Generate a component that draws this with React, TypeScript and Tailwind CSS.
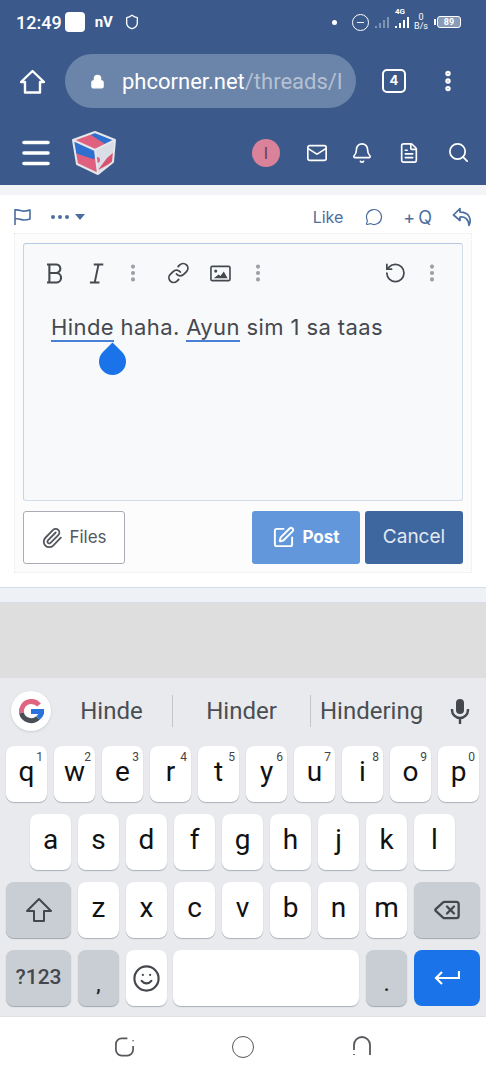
import { Bell, Delete, FileText, Link, Lock, Mail, Menu, MessageCircle, Minus, MoreVertical, Paperclip, RotateCcw, Search, Shield, Smile, SquarePen } from "lucide-react";

const TOP_ROW = [
  ["q", "1"],
  ["w", "2"],
  ["e", "3"],
  ["r", "4"],
  ["t", "5"],
  ["y", "6"],
  ["u", "7"],
  ["i", "8"],
  ["o", "9"],
  ["p", "0"],
];

function Key({ label, hint }: { label: string; hint?: string }) {
  return (
    <div className="relative flex h-[56px] w-[41px] items-center justify-center rounded-[8px] bg-white pb-[4px] text-[28px] leading-none text-[#111] shadow-[0_1px_1px_#aab0b8]">
      {label}
      {hint && <span className="absolute right-[4px] top-[4px] text-[12px] leading-[14px] text-[#444]">{hint}</span>}
    </div>
  );
}

function GrayKey({ className, children }: { className: string; children: React.ReactNode }) {
  return (
    <div className={`flex h-[56px] items-center justify-center rounded-[8px] bg-[#c9ced4] shadow-[0_1px_1px_#a0a6ad] ${className}`}>
      {children}
    </div>
  );
}

function Signal({ heights, className }: { heights: number[]; className: string }) {
  return (
    <div className="flex items-end gap-[2px]">
      {heights.map((h, i) => (
        <div key={i} className={`w-[2px] ${className} ${h === 2 ? "h-[2px]" : h === 5 ? "h-[5px]" : h === 8 ? "h-[8px]" : "h-[11px]"}`} />
      ))}
    </div>
  );
}

function Logo() {
  return (
    <svg width="46" height="46" viewBox="0 0 46 46">
      <path d="M2 10 L24 2 L44 10 L24 20Z" fill="#e0607f" />
      <path d="M24 2 L44 10 L34 14 L20 5Z" fill="#2f6fd0" />
      <path d="M2 10 L24 20 L27 44 L6 34Z" fill="#e0607f" />
      <path d="M2 10 L24 20 L25 30 L4 23Z" fill="#2f6fd0" />
      <path d="M24 20 L44 10 L42 32 L27 44Z" fill="#d9dde6" />
      <path d="M27 40 L42 32 L43 22 L36 28Z" fill="#d9526f" />
      <circle cx="26" cy="30" r="3" fill="#e0607f" />
      <path d="M2 10 L24 2 L44 10 L42 32 L27 44 L6 34Z M2 10 L24 20 L44 10 M24 20 L27 44" fill="none" stroke="#e4e6ea" strokeWidth="2" strokeLinejoin="round" />
    </svg>
  );
}

function Dots() {
  return <MoreVertical className="h-[22px] w-[22px] text-[#9a9da3]" strokeWidth={2.5} />;
}

export default function App() {
  return (
    <div className="flex h-[1080px] w-[486px] flex-col overflow-hidden bg-white font-['Inter',sans-serif]">
      {/* Blue browser chrome */}
      <div className="h-[185px] shrink-0 bg-[#3b5a8b] text-white">
        <div className="flex h-[40px] items-center pl-[16px] pr-[25px] pt-[4px] font-['Roboto',sans-serif]">
          <span className="text-[18px] font-medium">12:49</span>
          <div className="ml-[3px] h-[20px] w-[20px] rounded-[4px] bg-white" />
          <span className="ml-[10px] text-[15px] font-bold">nV</span>
          <Shield className="ml-[11px] h-[16px] w-[16px]" />
          <div className="ml-auto h-[5px] w-[5px] rounded-full bg-white" />
          <div className="ml-[15px] flex h-[17px] w-[17px] items-center justify-center rounded-full border-[1.5px] border-white">
            <Minus className="h-[11px] w-[11px]" />
          </div>
          <div className="ml-[6px] opacity-35">
            <Signal heights={[2, 5, 8, 11]} className="bg-white" />
          </div>
          <div className="relative ml-[6px]">
            <span className="absolute -top-[9px] left-0 text-[8px] font-bold leading-none">4G</span>
            <Signal heights={[2, 5, 8, 11]} className="bg-white" />
          </div>
          <div className="ml-[5px] flex flex-col items-center text-[9px] leading-[9px]">
            <span>0</span>
            <span>B/s</span>
          </div>
          <div className="ml-[6px] h-[6px] w-[2px] bg-white" />
          <div className="ml-[1px] flex h-[12px] w-[24px] items-center justify-center rounded-[3px] border border-white bg-[#8a9bb8] text-[9px] font-bold leading-none">89</div>
        </div>

        <div className="flex h-[78px] items-center pt-[4px]">
          <svg className="ml-[20px]" width="25" height="25" viewBox="0 0 25 25" fill="none" stroke="white" strokeWidth="2.4" strokeLinejoin="round">
            <path d="M12.5 2 L24 13 H20 V23.5 H5 V13 H1Z" />
          </svg>
          <div className="ml-[20px] flex h-[54px] w-[291px] items-center rounded-full bg-[#6b84a9] pl-[25px] font-['Roboto',sans-serif] text-[22px]">
            <Lock className="h-[17px] w-[15px] fill-white" />
            <div className="ml-[17px] w-[221px] overflow-hidden whitespace-nowrap">
              phcorner.net<span className="text-[#b5c1d3]">/threads/lc</span>
            </div>
          </div>
          <div className="ml-[26px] flex h-[24px] w-[24px] items-center justify-center rounded-[5px] border-2 border-white text-[13px] font-bold">4</div>
          <MoreVertical className="ml-[29px] h-[26px] w-[26px]" strokeWidth={3} />
        </div>

        <div className="flex h-[67px] items-center pt-[2px]">
          <Menu className="ml-[18px] h-[36px] w-[36px]" strokeWidth={2.4} />
          <div className="ml-[17px]">
            <Logo />
          </div>
          <div className="ml-[135px] flex h-[28px] w-[28px] items-center justify-center rounded-full bg-[#d9829a] text-[16px] text-[#6b3a48]">I</div>
          <Mail className="ml-[26px] h-[22px] w-[22px]" strokeWidth={1.8} />
          <Bell className="ml-[23px] h-[22px] w-[22px]" strokeWidth={1.8} />
          <FileText className="ml-[25px] h-[22px] w-[22px]" strokeWidth={1.8} />
          <Search className="ml-[27px] h-[23px] w-[23px]" strokeWidth={1.8} />
        </div>
      </div>

      <div className="h-[10px] shrink-0 bg-[#f2f4f8]" />

      {/* Post card */}
      <div className="h-[392px] shrink-0 bg-white px-[14px]">
        <div className="flex h-[38px] items-center pt-[6px] text-[#4b6e9f]">
          <svg className="-ml-px h-[20px] w-[20px]" viewBox="0 0 20 20" fill="none" stroke="currentColor" strokeWidth="1.6">
            <path d="M2 2v16M2 3c5-1 6 2 10 1 2 0 4-1 5-1v9c-3 1-4 1-6 1-3 0-5-2-9-1" />
          </svg>
          <div className="ml-[18px] flex gap-[3px]">
            <div className="h-[4px] w-[4px] rounded-full bg-[#4b6e9f]" />
            <div className="h-[4px] w-[4px] rounded-full bg-[#4b6e9f]" />
            <div className="h-[4px] w-[4px] rounded-full bg-[#4b6e9f]" />
          </div>
          <div className="ml-[6px] h-0 w-0 border-x-[5px] border-t-[6px] border-x-transparent border-t-[#4b6e9f]" />
          <span className="ml-auto text-[16px]">Like</span>
          <MessageCircle className="ml-[22px] h-[18px] w-[18px]" strokeWidth={1.6} />
          <span className="ml-[20px] text-[18px] tracking-[3px]">+Q</span>
          <svg className="ml-[17px]" width="20" height="20" viewBox="0 0 20 20" fill="none" stroke="currentColor" strokeWidth="1.7" strokeLinejoin="round">
            <path d="M8 1.5 L1.5 8 L8 13.5 V10 C13 9.5 16.5 12 17 18.5 C20 12 17 5 8 5.2Z" />
          </svg>
        </div>

        <div className="h-[340px] border border-dotted border-[#e8eaee] bg-[#fcfcfd] px-[8px] pt-[9px]">
          <div className="h-[258px] rounded-[3px] border border-[#d4dde9] border-t-[#b5c8e2] border-l-[#c4d2e6] bg-[#f8f9fb] px-[19px] pt-[13px] text-[#45494f]">
            <div className="flex h-[32px] items-center">
              <svg className="ml-[4px]" width="16" height="21" viewBox="0 0 16 21" fill="none" stroke="currentColor" strokeWidth="2.2">
                <path d="M0 1 H9 A4.5 4.5 0 0 1 10 10 A5 5 0 0 1 9.5 20 H0 M2.5 1 V20 M2.5 10 H10" />
              </svg>
              <svg className="ml-[27px]" width="16" height="21" viewBox="0 0 16 21" fill="none" stroke="currentColor" strokeWidth="2">
                <path d="M5 1 H15 M1 20 H11 M10 1 L6 20" />
              </svg>
              <div className="ml-[18px]"><Dots /></div>
              <Link className="ml-[23px] h-[24px] w-[24px]" strokeWidth={1.9} />
              <svg className="ml-[20px]" width="22" height="17" viewBox="0 0 22 17">
                <rect x="1" y="1" width="20" height="15" rx="1.5" fill="none" stroke="currentColor" strokeWidth="1.7" />
                <circle cx="6" cy="6" r="1.6" fill="currentColor" />
                <path d="M4 13.5 L9 9.5 L11 11 L14.5 6.5 L18.5 13.5Z" fill="currentColor" />
              </svg>
              <div className="ml-[16px]"><Dots /></div>
              <RotateCcw className="ml-[115px] h-[24px] w-[24px]" strokeWidth={1.8} />
              <div className="ml-[14px]"><Dots /></div>
            </div>
            <div className="relative ml-[8px] mt-[23px] text-[22px] leading-[30px] tracking-[0.4px]">
              <span className="border-b-2 border-[#4a7fd6]">Hinde</span> haha. <span className="border-b-2 border-[#4a7fd6]">Ayun</span> sim 1 sa taas
              <div className="absolute left-[48px] top-[36px] h-[27px] w-[27px] rotate-45 rounded-[50%_50%_50%_50%] rounded-tl-none bg-[#1a73e8]" />
            </div>
          </div>

          <div className="mt-[10px] flex">
            <div className="flex h-[53px] w-[102px] items-center justify-center gap-[6px] rounded-[3px] border border-[#a9adb3] bg-white text-[17px] text-[#55595f]">
              <Paperclip className="h-[22px] w-[22px]" strokeWidth={2} />
              Files
            </div>
            <div className="ml-auto flex h-[53px] w-[108px] items-center justify-center gap-[7px] rounded-[3px] bg-[#6397dc] text-[17px] font-bold text-white">
              <SquarePen className="h-[23px] w-[23px]" strokeWidth={2} />
              Post
            </div>
            <div className="ml-[5px] flex h-[53px] w-[98px] items-center justify-center rounded-[3px] bg-[#3e669f] text-[19px] text-[#e4e9f1]">Cancel</div>
          </div>
        </div>
      </div>

      <div className="h-[16px] shrink-0 border-y border-y-[#d7dde6] bg-[#eef1f5]" />
      <div className="h-[75px] shrink-0 bg-[#dedede]" />

      {/* Keyboard */}
      <div className="h-[338px] shrink-0 bg-[#e8eaed]">
        <div className="flex h-[68px] items-center pb-[2px] pl-[11px] pr-[16px] font-['Roboto',sans-serif] text-[24px] text-[#4a4d52]">
          <div className="flex h-[40px] w-[40px] items-center justify-center rounded-full bg-white shadow-sm">
            <svg width="26" height="26" viewBox="0 0 26 26" fill="none" strokeWidth="5">
              <path d="M21 7 A10 10 0 0 0 5 8 A10 10 0 0 0 3.5 15" stroke="#df6481" />
              <path d="M3.5 15 A10 10 0 0 0 20 20" stroke="#4a4f57" />
              <path d="M13 13.5 H24 A10 10 0 0 1 20 20" stroke="#2a73dd" />
            </svg>
          </div>
          <div className="flex w-[121px] justify-center">Hinde</div>
          <div className="h-[32px] w-px bg-[#c2c5ca]" />
          <div className="flex w-[137px] justify-center">Hinder</div>
          <div className="h-[32px] w-px bg-[#c2c5ca]" />
          <div className="ml-[9px]">Hindering</div>
          <svg className="ml-auto" width="20" height="27" viewBox="0 0 20 27" fill="none" stroke="#44474c" strokeWidth="2.4">
            <rect x="6" y="1" width="8" height="15" rx="4" fill="#44474c" stroke="none" />
            <path d="M2 11 V12 A8 8 0 0 0 18 12 V11 M10 20 V26" />
          </svg>
        </div>

        <div className="flex flex-col gap-[12px] font-['Roboto',sans-serif]">
          <div className="flex gap-[7px] pl-[6px]">
            {TOP_ROW.map(([k, n]) => (
              <Key key={k} label={k} hint={n} />
            ))}
          </div>
          <div className="flex gap-[7px] pl-[30px]">
            {"asdfghjkl".split("").map((k) => (
              <Key key={k} label={k} />
            ))}
          </div>
          <div className="flex gap-[7px] pl-[6px]">
            <GrayKey className="w-[65px]">
              <svg width="28" height="26" viewBox="0 0 28 26" fill="none" stroke="#44484e" strokeWidth="2" strokeLinejoin="round">
                <path d="M14 2 L26 14 H19 V24 H9 V14 H2Z" />
              </svg>
            </GrayKey>
            {"zxcvbnm".split("").map((k) => (
              <Key key={k} label={k} />
            ))}
            <GrayKey className="w-[66px]">
              <Delete className="h-[28px] w-[30px] text-[#44484e]" strokeWidth={2} />
            </GrayKey>
          </div>
          <div className="flex gap-[7px] pl-[6px]">
            <GrayKey className="w-[65px] text-[21px] font-medium text-[#44484e]">?123</GrayKey>
            <GrayKey className="w-[41px] pt-[12px] text-[18px] font-bold text-[#222]">,</GrayKey>
            <div className="flex h-[56px] w-[41px] items-center justify-center rounded-[8px] bg-white shadow-[0_1px_1px_#aab0b8]">
              <Smile className="h-[29px] w-[29px] text-[#44484e]" strokeWidth={1.8} />
            </div>
            <div className="-ml-px h-[56px] w-[186px] rounded-[8px] bg-white shadow-[0_1px_1px_#aab0b8]" />
            <GrayKey className="w-[41px] pt-[12px] text-[18px] font-bold text-[#222]">.</GrayKey>
            <div className="flex h-[56px] w-[66px] items-center justify-center rounded-[8px] bg-[#1a73e8]">
              <svg width="26" height="17" viewBox="0 0 26 17" fill="none" stroke="white" strokeWidth="2.2">
                <path d="M25 1 V8 H2 M8 2 L2 8 L8 14" />
              </svg>
            </div>
          </div>
        </div>
      </div>

      {/* Navigation bar */}
      <div className="flex flex-1 items-start border-t border-t-[#dfe1e4] bg-white pt-[19px] text-[#55585d]">
        <svg className="ml-[114px]" width="21" height="22" viewBox="0 0 22 22" fill="none" stroke="currentColor" strokeWidth="1.8">
          <path d="M14 2 H8 A6 6 0 0 0 2 8 V14 A6 6 0 0 0 8 20 H14 A6 6 0 0 0 20 14 V10" />
          <path d="M20 4 V5" />
        </svg>
        <div className="ml-[97px] h-[22px] w-[22px] rounded-full border-[1.8px] border-current" />
        <svg className="ml-[97px]" width="22" height="22" viewBox="0 0 22 22" fill="none" stroke="currentColor" strokeWidth="1.8">
          <path d="M3 14 V9 A8 8 0 0 1 19 9 V19" />
          <path d="M3 18 V19" />
        </svg>
      </div>
    </div>
  );
}
